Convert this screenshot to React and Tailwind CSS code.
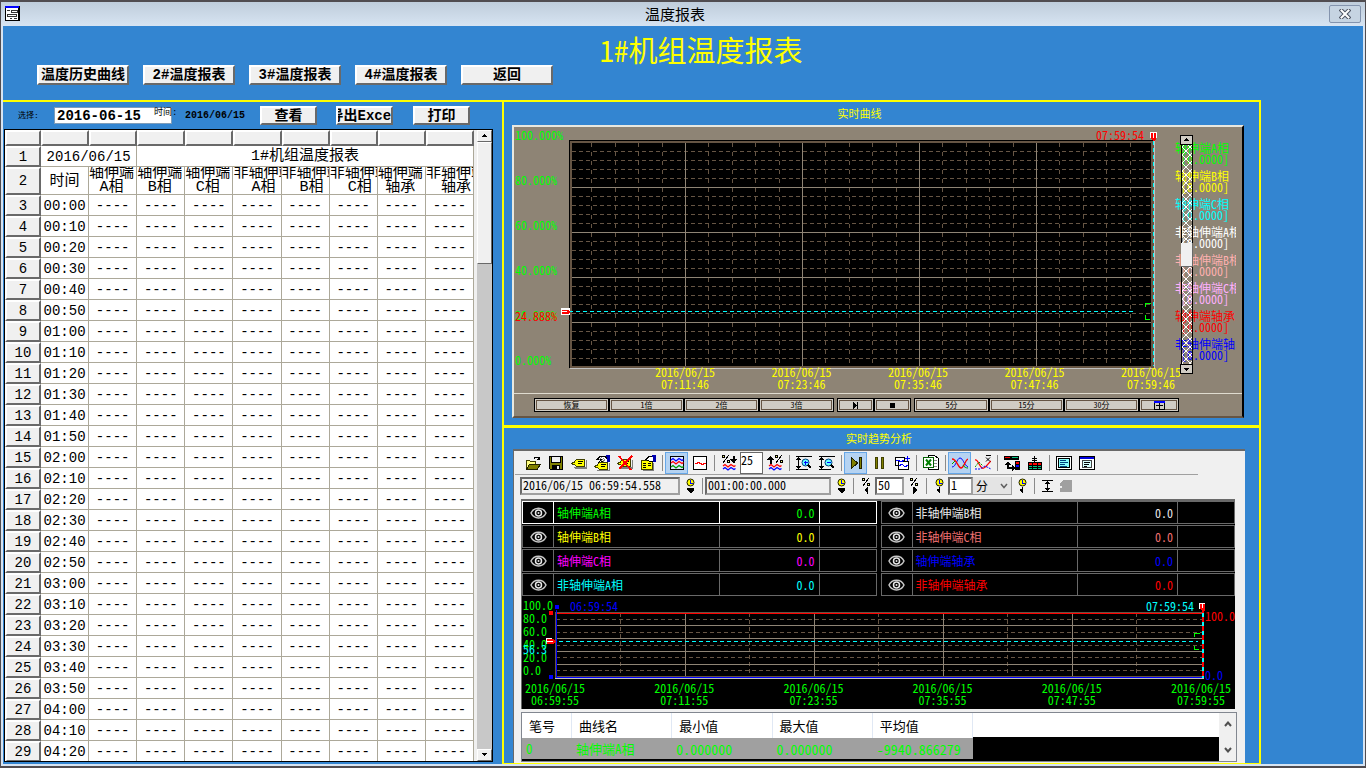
import React from "react";

const GREEN = "#00ff00";

/* ---------- shared bits ---------- */

function BevelButton({ className = "", children }) {
  return (
    <button
      type="button"
      className={`flex items-center justify-center overflow-hidden whitespace-nowrap border-2 border-t-white border-l-white border-r-[#696969] border-b-[#696969] bg-[#f0f0f0] text-[14px] leading-[14px] font-bold text-black ${className}`}
    >
      {children}
    </button>
  );
}

function Icon({ children, size = 16 }) {
  return (
    <svg width={size} height={size} viewBox="0 0 16 16" fill="none" shapeRendering="crispEdges" aria-hidden="true">
      {children}
    </svg>
  );
}

function Arrow({ up }) {
  return (
    <svg width="7" height="4" viewBox="0 0 7 4" shapeRendering="crispEdges" aria-hidden="true">
      {up ? <path d="M3 0h1v1h1v1h1v1h-5v-1h1v-1h1z" /> : <path d="M1 0h5v1h-1v1h-1v1h-1v-1h-1v-1h-1z" />}
    </svg>
  );
}

/* ---------- toolbar icons ---------- */

const Tag = ({ x = 0, y = 0 }) => (
  <g transform={`translate(${x} ${y})`}>
    <path d="M3 11h12v-7h1v9h-12z" fill="#808080" />
    <path d="M5 3h9v8h-9l-2-2h-2l-1-2 1-1h2z" fill="#404000" />
    <path d="M5 4h8v6h-8l-1-2h-2v-1h2z" fill="#ffff00" />
    <path d="M7 5.500h5M7 7.500h4" stroke="#000" />
  </g>
);

const Hand = () => (
  <g>
    <path d="M3 4.500l3-3h5l2 2v5h-2l-3-2-2 2-1-1 2-3h-4z" fill="#fff" stroke="#000" />
    <path d="M5 5l3-3M7 6l3-3M9 7l2-3" stroke="#808080" />
    <path d="M12 0h4v7h-3v-5h-1z" fill="#0000b0" />
  </g>
);

const Wave = ({ y, c }) => <path d={`M2 ${y}l2-1.500 3 2.500 3-2.500 3 2 1.500-1`} stroke={c} shapeRendering="auto" strokeWidth="1.300" />;

const Percent = ({ x = 0, y = 0 }) => (
  <g transform={`translate(${x} ${y})`}>
    <path d="M0 0h3v3h-3zM5 5h3v3h-3z" fill="#000" />
    <path d="M1 1h1v1h-1zM6 6h1v1h-1z" fill="#ffff80" />
    <path d="M7 0l-6 8" stroke="#000" />
  </g>
);

const Clock = ({ up }) => (
  <g>
    <circle cx="8.500" cy="4.500" r="3.500" fill="#ffff00" stroke="#202000" shapeRendering="auto" />
    <path d="M8.500 2v3h2.500" stroke="#0000ff" />
    {up ? <path d="M8.500 9v6M8 11h-2v1h2M7 13h1" stroke="#000" /> : <path d="M5 10h7v2l-3 3h-1l-3-3z" fill="#000" />}
  </g>
);

const Magnifier = ({ plus }) => (
  <g>
    <path d="M0 1.500h16M0 14.500h12M2.500 3v10" stroke="#000" />
    <path d="M0 5l2.500-3 2.500 3zM0 11l2.500 3 2.500-3z" fill="#000" />
    <circle cx="9.500" cy="7.500" r="3.500" fill="#66ffff" stroke="#004080" shapeRendering="auto" />
    <path d={plus ? "M8 7.500h4M9.500 5.500v4" : "M8 7.500h4"} stroke="#0000ff" />
    <path d="M12 10l3 3" stroke="#000" strokeWidth="2" />
  </g>
);

const ICONS = {
  open: (
    <g>
      <path d="M1.500 14.500v-9h3l1 1h5v3" fill="#ffff80" stroke="#404000" />
      <path d="M1.500 14.500l3-5h11l-3.500 5z" fill="#808000" stroke="#202000" />
      <path d="M9 3.500l1.500-1.500h2l2 2M14.500 1.500v3h-3" stroke="#000" />
    </g>
  ),
  save: (
    <g>
      <path d="M1 1h14v14h-13l-1-1z" fill="#000" />
      <path d="M2 2h1v6h10v-6h1v12h-12z" fill="#808000" />
      <path d="M4 2h8v5h-8z" fill="#f0f0f0" />
      <path d="M4 10h8v4h-8z" fill="#000" />
      <path d="M9 11h2v3h-2z" fill="#f0f0f0" />
    </g>
  ),
  tag: <Tag y={1} />,
  tagEdit: (
    <g>
      <Hand />
      <Tag y={4} />
    </g>
  ),
  tagDelete: (
    <g>
      <Tag y={1} />
      <path d="M2 1l12 14M15 1l-13 13" stroke="#ff0000" strokeWidth="1.800" />
    </g>
  ),
  props: (
    <g>
      <path d="M13 15h-10v1h11v-8h-1z" fill="#808080" />
      <path d="M1.500 5.500h11v9h-11z" fill="#ffff00" stroke="#404000" />
      <path d="M3 8.500h3M8 8.500h3M3 10.500h3M8 10.500h3M3 12.500h3" stroke="#000" />
      <path d="M6 4.500l3-3h4v5h-3z" fill="#fff" stroke="#000" />
      <path d="M12 0h4v7h-3v-5h-1z" fill="#0000b0" />
    </g>
  ),
  multi: (
    <g>
      <path d="M1.500 1.500h13v13h-13z" fill="#dde8ff" stroke="#000" />
      <Wave y={5} c="#0000ff" />
      <Wave y={8} c="#ff0000" />
      <Wave y={12} c="#00a000" />
    </g>
  ),
  single: (
    <g>
      <path d="M1.500 1.500h13v13h-13z" fill="#fff" stroke="#000" />
      <path d="M3 8.500h2v-1h2v1h2v1h2v-1h3" stroke="#ff0000" />
    </g>
  ),
  pctDown: (
    <g>
      <Percent x={1} />
      <path d="M12.500 1v7" stroke="#000" strokeWidth="2" />
      <path d="M9 4h7l-3 4h-1z" fill="#000" />
      <Wave y={11} c="#ff0000" />
      <Wave y={14} c="#0000ff" />
    </g>
  ),
  pctUp: (
    <g>
      <Percent x={8} />
      <path d="M3.500 2v7" stroke="#000" strokeWidth="2" />
      <path d="M0 5h7l-3-4h-1z" fill="#000" />
      <Wave y={11} c="#ff0000" />
      <Wave y={14} c="#0000ff" />
    </g>
  ),
  zoomIn: <Magnifier plus />,
  zoomOut: <Magnifier />,
  play: <path d="M3.500 2.500v11l6-5.500zM11.500 2.500h2v11h-2z" fill="#808000" stroke="#202000" />,
  pause: <path d="M4.500 2.500h2v11h-2zM10.500 2.500h2v11h-2z" fill="#808000" stroke="#404000" />,
  copyChart: (
    <g>
      <path d="M1.500 2.500h9v8h-9z" fill="#fff" stroke="#000" />
      <path d="M4.500 6.500h10v8h-10z" fill="#fff" stroke="#000" />
      <path d="M2 6l2-1 3 2 3-2M5 11l3-2 3 3 3-2" stroke="#0000ff" />
      <path d="M11 3.500h5M13.500 1v5" stroke="#0000ff" />
    </g>
  ),
  excel: (
    <g>
      <path d="M5.500 .5h6l4 3v11h-10z" fill="#fff" stroke="#000" />
      <path d="M11 5.500h3M11 8.500h3M11 11.500h3" stroke="#888" />
      <path d="M.5 2.500h10v10h-10z" fill="#fff" stroke="#006000" />
      <path d="M3 4.500l5 6M8 4.500l-5 6" stroke="#008000" strokeWidth="2" shapeRendering="auto" />
    </g>
  ),
  curves: (
    <g shapeRendering="auto">
      <path d="M0 12c4 0 5-9 8-9s4 7 8 9" stroke="#0000ff" />
      <path d="M0 4c5 0 6 9 9 9c3 0 4-8 7-9" stroke="#ff0000" strokeWidth="1.300" />
      <path d="M0 9l3-3M11 10c1 2 3 3 5 3" stroke="#00a000" />
    </g>
  ),
  curvesX: (
    <g shapeRendering="auto">
      <path d="M0 5c3-1 4 6 7 8s6-5 9-7" stroke="#ff0000" strokeWidth="1.300" />
      <path d="M0 12l4-5 4 4" stroke="#00a000" strokeDasharray="2 1" />
      <path d="M0 14l5 0 5-3 6 3" stroke="#0000ff" strokeDasharray="2 1" />
      <path d="M11 .5h5M11 2.500l4 4M15 2.500l-4 4" stroke="#000" />
    </g>
  ),
  swap: (
    <g>
      <path d="M0 1h15v4h-15zM11 6h5v9h-5z" fill="#000" />
      <path d="M1 2h5v1h-5z" fill="#ff0000" />
      <path d="M8 2h6v1h-6z" fill="#00c080" />
      <path d="M12 7h3v2h-3z" fill="#ff0000" />
      <path d="M12 10h3v2h-3z" fill="#0000ff" />
      <path d="M1 10l3-4 3 4h-2v2h3v-2l3 3-3 3v-2h-5v-4z" fill="#000" />
    </g>
  ),
  stack: (
    <g>
      <path d="M7.500 1v7M5 3.500h5M5 5.500h5" stroke="#000" />
      <path d="M1 7h14v8h-14z" fill="#000" />
      <path d="M2 8h3v2h-3zM6 8h4v2h-4zM11 8h3v2h-3z" fill="#ff0000" />
      <path d="M2 11h3v1h-3zM6 11h4v1h-4zM11 11h3v1h-3zM2 13h3v1h-3zM6 13h4v1h-4zM11 13h3v1h-3z" fill="#00c080" />
    </g>
  ),
  list: (
    <g>
      <path d="M.5 1.500h15v13h-15z" fill="#fff" stroke="#000" />
      <path d="M2.500 3.500h11v9h-11z" fill="#88ffff" stroke="#000" />
      <path d="M4 5.500h6M4 7.500h8M4 9.500h5M4 11.500h7" stroke="#004080" />
    </g>
  ),
  windowIcon: (
    <g>
      <path d="M.5 1.500h15v13h-15z" fill="#fff" stroke="#000" />
      <path d="M1 2h14v2h-14z" fill="#0000e0" />
      <path d="M3.500 5.500h9v7h-9z" fill="#d8ffff" stroke="#444" />
      <path d="M5 7.500h6M5 9.500h5M5 11.500h3" stroke="#000" />
    </g>
  ),
  clockDown: <Clock />,
  clockUp: <Clock up />,
  pctLeft: (
    <g>
      <Percent x={4} />
      <path d="M9 9h1v7h-1zM6 12l3-3v6z" fill="#000" />
    </g>
  ),
  pctRight: (
    <g>
      <Percent x={4} />
      <path d="M7 9h1v7h-1zM11 12l-3-3v6z" fill="#000" />
    </g>
  ),
  span: (
    <g>
      <path d="M3 2.500h11M3 13.500h11M8.500 3v10" stroke="#000" />
      <path d="M6 6l2.500-3 2.500 3zM6 10l2.500 3 2.500-3z" fill="#000" />
    </g>
  ),
  grayTag: <path d="M5 2h9v12h-12v-4h2v-2h-2v-3z" fill="#a0a0a0" />,
};

const TOOLBAR = [
  ["open", "打开"], ["save", "保存"], ["tag", "标签"], ["tagEdit", "编辑标签"], ["tagDelete", "删除标签"], ["props", "属性"],
  null,
  ["multi", "多曲线", true], ["single", "单曲线"],
  null,
  ["pctDown", "缩小百分比"], "input", ["pctUp", "放大百分比"],
  null,
  ["zoomIn", "放大"], ["zoomOut", "缩小"],
  null,
  ["play", "播放", true], ["pause", "暂停"], ["copyChart", "复制曲线"],
  null,
  ["excel", "导出"],
  null,
  ["curves", "曲线", true], ["curvesX", "平均曲线"],
  null,
  ["swap", "交换"], ["stack", "排列"],
  null,
  ["list", "列表"], ["windowIcon", "窗口"],
];

const Sep = () => <span className="flex w-1.5 shrink-0 justify-center"><span className="h-4 w-px bg-[#8a8a8a]" /></span>;

function ToolButton({ name, label, active }) {
  return (
    <button
      type="button"
      aria-label={label}
      className={`flex h-[22px] w-[23px] shrink-0 items-center justify-center ${active ? "border border-[#66a7e8] bg-[#b5d3f2]" : ""}`}
    >
      <Icon>{ICONS[name]}</Icon>
    </button>
  );
}

function SmallTool({ name, label }) {
  return (
    <button type="button" aria-label={label} className="flex h-5 w-[19px] shrink-0 items-center justify-center">
      <Icon>{ICONS[name]}</Icon>
    </button>
  );
}

/* ---------- title and header ---------- */

function TitleBar() {
  return (
    <header className="flex h-[26px] shrink-0 items-center border-t-2 border-t-[#504c50] bg-linear-to-b from-[#bfcddb] to-[#d7e4f2] px-1">
      <svg width="16" height="16" viewBox="0 0 16 16" shapeRendering="crispEdges" aria-hidden="true">
        <path d="M0 0h15v15h-15z" />
        <path d="M1 2h12v12h-12z" fill="#fff" />
        <path d="M0 0h14v2h-14z" fill="#0000ff" />
        <path d="M2 4.500h3M6 4.500h6v2h-6zM2 8.500h9v2h-9zM5 12.500h2M9 12.500h3" fill="none" stroke="#333" />
      </svg>
      <h1 className="flex-1 text-center font-['Noto_Sans_CJK_SC',sans-serif] text-[15px] leading-5 text-black">温度报表</h1>
      <button
        type="button"
        aria-label="关闭"
        className="flex h-[18px] w-8 items-center justify-center rounded-xs border border-[#8494ae] bg-[#c6d4e2]"
      >
        <svg width="12" height="10" viewBox="0 0 12 10" fill="none" aria-hidden="true">
          <path d="M2.500 1.500l7 7M9.500 1.500l-7 7" stroke="#4b5160" strokeWidth="4" strokeLinecap="square" />
          <path d="M2.500 1.500l7 7M9.500 1.500l-7 7" stroke="#fff" strokeWidth="2" strokeLinecap="square" />
        </svg>
      </button>
    </header>
  );
}

const NAV = ["温度历史曲线", "2#温度报表", "3#温度报表", "4#温度报表", "返回"];

function PageHeader() {
  return (
    <div className="flex h-[74px] shrink-0 flex-col">
      <h2 className="h-[39px] pt-[3px] pl-9 text-center font-['Noto_Sans_Mono_CJK_SC','Noto_Sans_CJK_SC',monospace] text-[29px] leading-[40px] text-[#ffff00]">1#机组温度报表</h2>
      <nav className="flex gap-3.5 pl-[34px]">
        {NAV.map((n) => (
          <BevelButton key={n} className="h-5 w-[92px]">{n}</BevelButton>
        ))}
      </nav>
    </div>
  );
}

/* ---------- report table ---------- */

const COLS = [
  ["轴伸端", "A相"], ["轴伸端", "B相"], ["轴伸端", "C相"],
  ["非轴伸端", "A相"], ["非轴伸端", "B相"], ["非轴伸端", "C相"],
  ["轴伸端", "轴承"], ["非轴伸端", "轴承"],
];

const TIMES = Array.from({ length: 27 }, (_, i) => {
  const m = i * 10;
  return `${String(Math.floor(m / 60)).padStart(2, "0")}:${String(m % 60).padStart(2, "0")}`;
});

const HEAD = "border-2 border-t-white border-l-white border-r-[#696969] border-b-[#696969] bg-[#f0f0f0] p-0 font-normal";
const CELL = "border-r border-b border-[#aca899] bg-white p-0 text-center overflow-hidden whitespace-nowrap";

function ReportTable() {
  return (
    <div className="mx-px mr-[9px] flex min-h-0 flex-1 justify-between overflow-hidden border border-black bg-[#f0f0f0]">
      <table className="h-max w-[469px] table-fixed border-separate border-spacing-0 text-[14px] leading-4 text-black">
        <colgroup>
          <col className="w-9" />
          {Array.from({ length: 9 }, (_, i) => <col key={i} />)}
        </colgroup>
        <thead>
          <tr className="h-4">
            {Array.from({ length: 10 }, (_, i) => <th key={i} aria-label={`列${i}`} className={HEAD} />)}
          </tr>
        </thead>
        <tbody>
          <tr className="h-[21px]">
            <th className={HEAD}>1</th>
            <td className={`${CELL} pt-0.5`} colSpan={2}>2016/06/15</td>
            <td className={`${CELL} pt-0.5 text-[15px]`} colSpan={7}>1#机组温度报表</td>
          </tr>
          <tr className="h-7">
            <th className={HEAD}>2</th>
            <td className={`${CELL} pt-0.5 text-[15px]`}>时间</td>
            {COLS.map(([a, b], i) => (
              <td key={i} className={CELL}>
                <div className="h-[27px] w-max text-[15px] leading-[14px]">
                  <div>{a}</div>
                  <div>{b}</div>
                </div>
              </td>
            ))}
          </tr>
          {TIMES.map((t, i) => (
            <tr key={t} className="h-[21px]">
              <th className={HEAD}>{i + 3}</th>
              <td className={`${CELL} pt-0.5`}>{t}</td>
              {COLS.map((_, c) => <td key={c} className={`${CELL} pt-0.5`}>----</td>)}
            </tr>
          ))}
        </tbody>
      </table>
      <div className="flex w-[15px] flex-col bg-[#c8c8c8]">
        <button type="button" aria-label="上移" className="flex h-3 items-center justify-center border border-t-white border-l-white border-r-[#696969] border-b-[#696969] bg-[#f0f0f0]"><Arrow up /></button>
        <div className="h-[122px] border border-t-white border-l-white border-r-[#696969] border-b-[#696969] bg-[#f0f0f0]" />
        <div className="flex-1" />
        <button type="button" aria-label="下移" className="flex h-3 items-center justify-center border border-t-white border-l-white border-r-[#696969] border-b-[#696969] bg-[#f0f0f0]"><Arrow /></button>
      </div>
    </div>
  );
}

function ReportPanel() {
  return (
    <section className="flex w-[499px] shrink-0 flex-col pb-0.5">
      <div className="flex h-[27px] shrink-0 items-center pl-[15px] text-black">
        <label htmlFor="day" className="w-9 text-[8px] leading-3">选择:</label>
        <div className="relative mr-[13px]">
          <input id="day" defaultValue="2016-06-15" className="block h-[17px] w-[118px] border border-[#7f9db9] bg-white p-0 pl-0.5 text-[14px] leading-4 font-bold" />
          <span className="absolute top-0 left-[100px] text-[9px] leading-3 whitespace-nowrap">时间:</span>
        </div>
        <time className="w-[75px] text-[10px] leading-3 font-bold">2016/06/15</time>
        <BevelButton className="h-[19px] w-[57px]">查看</BevelButton>
        <BevelButton className="ml-[19px] h-[19px] w-[57px]">导出Excel</BevelButton>
        <BevelButton className="ml-5 h-[19px] w-[57px]">打印</BevelButton>
      </div>
      <ReportTable />
    </section>
  );
}

/* ---------- real time chart ---------- */

const range = (n, f) => Array.from({ length: n }, (_, i) => f(i));

const LEGEND = [
  ["轴伸端A相", "#00ff00"], ["轴伸端B相", "#ffff00"], ["轴伸端C相", "#00ffff"], ["非轴伸端A相", "#ffffff"],
  ["非轴伸端B相", "#ffb0b0"], ["非轴伸端C相", "#ffb0ff"], ["轴伸端轴承", "#ff0000"], ["非轴伸端轴承", "#0000ff"],
];

const TICKS1 = ["07:11:46", "07:23:46", "07:35:46", "07:47:46", "07:59:46"];

function RealtimeChart() {
  return (
    <svg viewBox="0 0 728 266" className="block h-auto w-full" fontSize="12" role="img" aria-label="实时曲线">
      <defs>
        <pattern id="hatch" width="8" height="8" patternUnits="userSpaceOnUse">
          <path d="M0 0l8 8M8 0l-8 8" stroke="#fff" strokeWidth="1" />
        </pattern>
        <clipPath id="legendClip"><rect x="655" y="0" width="67" height="260" /></clipPath>
      </defs>
      <g shapeRendering="crispEdges" fill="none">
        <rect x="55" y="13" width="585" height="228" fill="#665544" />
        <path d="M55.500 241v-227.500h585" stroke="#000" />
        <path d="M56 241.500h584.500v-228" stroke="#c0c0c0" />
        <rect x="58" y="16" width="579" height="223" fill="#000" />
        {range(24, (i) => i + 1).filter((i) => i % 5 !== 0).map((i) => (
          <path key={i} d={`M${Math.round(54 + i * 23.4) + 0.5} 16v223`} stroke="#665544" strokeDasharray="4 5" />
        ))}
        {range(24, (i) => i + 1).filter((i) => i % 5 !== 0).map((i) => (
          <path key={i} d={`M58 ${15.5 + i * 9}h579`} stroke="#665544" strokeDasharray="4 3" />
        ))}
        {range(4, (i) => (
          <path key={i} d={`M${171.5 + i * 117} 16v223M58 ${60.5 + i * 45}h579`} stroke="#8e8475" />
        ))}
        <path d="M55 184.500h567" stroke="#00ffff" strokeDasharray="4 3" />
        <path d="M639.500 14v225" stroke="#00ffff" strokeDasharray="4 3" />
        <path d="M631.500 180v-3.500h5M631.500 188v4h4" stroke={GREEN} />
        <path d="M47 181h9v7h-9z" fill="#fff" />
        <path d="M48 183h6l3 2-3 2h-6z" fill="#ff0000" />
        <path d="M48 184.500h5" stroke="#fff" />
        <path d="M636 5h7v6h-7z" fill="#fff" />
        <path d="M637 6h5v6l-2 3-3-3z" fill="#ff0000" />
        <path d="M639.500 6v5" stroke="#fff" />
      </g>
      <g fill={GREEN}>
        <text x="1" y="13">100.000%</text>
        <text x="1" y="58">80.000%</text>
        <text x="1" y="103">60.000%</text>
        <text x="1" y="148">40.000%</text>
        <text x="1" y="193">20.000%</text>
        <text x="1" y="238">0.000%</text>
      </g>
      <text x="1" y="194" fill="#ff0000">24.888%</text>
      <text x="582" y="13" fill="#ff0000">07:59:54</text>
      <g fill="#ffff00" textAnchor="middle">
        {TICKS1.map((t, i) => (
          <text key={t}>
            <tspan x={171 + i * 116.5} y="250">2016/06/15</tspan>
            <tspan x={171 + i * 116.5} y="262">{t}</tspan>
          </text>
        ))}
      </g>
      <g clipPath="url(#legendClip)">
        {LEGEND.map(([n, c], i) => (
          <g key={n} fill={c}>
            <text x="661" y={26 + i * 28}>{n}</text>
            <text x="667" y={37 + i * 28}>[0.0000]</text>
          </g>
        ))}
      </g>
      <g shapeRendering="crispEdges">
        <rect x="668" y="18" width="10" height="219" fill="url(#hatch)" />
        <path d="M667.500 18v219M678.500 18v219" stroke="#000" />
        <rect x="666.500" y="8.500" width="12" height="9" fill="#d0ccc4" stroke="#000" />
        <path d="M672 11h1v1h1v1h1v1h-5v-1h1v-1h1z" />
        <rect x="666.500" y="237.500" width="12" height="9" fill="#d0ccc4" stroke="#000" />
        <path d="M670 241h5v1h-1v1h-1v1h-1v-1h-1v-1h-1z" />
        <rect x="667" y="116" width="11" height="23" fill="#f0f0f0" />
        <path d="M678.500 116v23.500h-12" stroke="#696969" fill="none" />
      </g>
    </svg>
  );
}

function ScopeButton({ className = "w-[75px]", label, children }) {
  return (
    <button type="button" aria-label={label} className={`flex h-3.5 items-center justify-center border border-black bg-[#d0ccc4] p-px text-[8px] leading-[8px] text-black ${className}`}>
      <span className="flex h-full w-full items-center justify-center border border-[#665544]">{children}</span>
    </button>
  );
}

function RealtimePanel() {
  return (
    <section className="h-[323px] shrink-0 pl-2 pr-[15px]">
      <h3 className="h-[23px] pt-1 pr-[37px] text-center text-[11px] leading-[14px] text-[#ffff00]">实时曲线</h3>
      <div className="border-2 border-t-[#e8e8e0] border-l-[#e8e8e0] border-r-black border-b-[#665544] bg-[#8e8475]">
        <RealtimeChart />
        <div className="flex h-[23px] items-start border-t border-[#e0dcd0] pt-1 pl-5">
          <ScopeButton>恢复</ScopeButton>
          <ScopeButton>1倍</ScopeButton>
          <ScopeButton>2倍</ScopeButton>
          <ScopeButton>3倍</ScopeButton>
          <ScopeButton className="ml-[3px] w-[37px]" label="前进">
            <svg width="7" height="7" viewBox="0 0 7 7" shapeRendering="crispEdges"><path d="M1 0l4 3.500-4 3.500zM5 0h1v7h-1z" /></svg>
          </ScopeButton>
          <ScopeButton className="w-[37px]" label="停止">
            <svg width="5" height="5" viewBox="0 0 5 5"><path d="M0 0h5v5h-5z" /></svg>
          </ScopeButton>
          <ScopeButton className="ml-[3px] w-[75px]">5分</ScopeButton>
          <ScopeButton>15分</ScopeButton>
          <ScopeButton>30分</ScopeButton>
          <ScopeButton className="w-10" label="表格">
            <svg width="11" height="9" viewBox="0 0 11 9" fill="none" shapeRendering="crispEdges">
              <path d="M.5 .5h10v8h-10zM5.500 1v7M2 4.500h7" stroke="#000" />
              <path d="M0 0h11v2h-11z" fill="#0000ff" />
            </svg>
          </ScopeButton>
        </div>
      </div>
    </section>
  );
}

/* ---------- trend analysis ---------- */

const PENS = [
  ["轴伸端A相", "#00ff00"], ["非轴伸端B相", "#e8e8e8"],
  ["轴伸端B相", "#ffff00"], ["非轴伸端C相", "#f07070"],
  ["轴伸端C相", "#ff00ff"], ["轴伸端轴承", "#0000ff"],
  ["非轴伸端A相", "#00ffff"], ["非轴伸端轴承", "#ff0000"],
];

function Eye() {
  return (
    <svg width="17" height="12" viewBox="0 0 17 12" fill="none" aria-hidden="true">
      <path d="M1 6c3-6.500 12-6.500 15 0c-3 6.500-12 6.500-15 0z" stroke="#c8c8c8" strokeWidth="1.500" />
      <circle cx="8.500" cy="6" r="3" stroke="#e8e8e8" strokeWidth="1.500" />
      <circle cx="8.500" cy="6" r="1" fill="#e0e0e0" />
    </svg>
  );
}

function PenGrid() {
  return (
    <div className="grid grid-cols-2 gap-x-1 gap-y-px pb-0.5 text-[12px] leading-[14px]">
      {PENS.map(([n, c], i) => {
        const line = i === 0 ? "border-white" : "border-[#696969]";
        return (
          <div key={n} className={`flex h-[23px] border ${line}`} style={{ color: c }}>
            <span className={`flex w-[31px] shrink-0 items-center justify-center border-r ${line}`}><Eye /></span>
            <span className={`flex flex-1 items-center border-r pl-[3px] ${line}`}>{n}</span>
            <span className={`flex w-[100px] items-center justify-end border-r pr-1 ${line}`}>0.0</span>
            <span className="w-14" />
          </div>
        );
      })}
    </div>
  );
}

const TICKS2 = ["06:59:55", "07:11:55", "07:23:55", "07:35:55", "07:47:55", "07:59:55"];

function TrendChart() {
  return (
    <svg viewBox="0 0 713 111" className="block h-auto w-full" fontSize="12" role="img" aria-label="实时趋势">
      <g shapeRendering="crispEdges" fill="none">
        {range(5, (i) => (
          <path key={i} d={`M${98.5 + i * 129} 15v64M34 ${21.5 + i * 12.8}h646`} stroke="#665544" strokeDasharray="4 3" />
        ))}
        {range(4, (i) => (
          <path key={i} d={`M${163.5 + i * 129} 15v64M34 ${27.5 + i * 13}h646`} stroke="#8e8475" />
        ))}
        <path d="M33 14.500h648" stroke="#665544" />
        <path d="M33 15.500h648" stroke="#ff0000" />
        <path d="M33 78.500h648" stroke="#665544" />
        <path d="M33 80.500h649" stroke="#c0c0c0" />
        <path d="M34.500 12v68M34 79.500h647" stroke="#0000ff" />
        <path d="M33.500 14v66" stroke="#665544" />
        <path d="M30 43.500h646" stroke="#00ffff" strokeDasharray="4 3" />
        <path d="M681 12v68" stroke="#ff0000" strokeWidth="2" />
        <path d="M681 15v65" stroke="#00ffff" strokeWidth="2" strokeDasharray="4 5" />
        <path d="M672.500 39v-3.500h5M672.500 48v3.500h4" stroke={GREEN} />
        <path d="M33 7h4v4h-4zM27 77h4v4h-4z" fill="#0000ff" />
        <path d="M27 13h4v4h-4z" fill="#ff0000" />
        <path d="M24 40h6v6h-6z" fill="#fff" />
        <path d="M25 41h6l3 2-3 3h-6z" fill="#ff0000" />
        <path d="M25 43.500h6" stroke="#fff" />
        <path d="M677 5h6v6h-6z" fill="#fff" />
        <path d="M678 6h5v6l-2 2-3-3z" fill="#ff0000" />
        <path d="M680.500 6v4" stroke="#fff" />
      </g>
      <g fill={GREEN}>
        {["100.0", "80.0", "60.0", "40.0", "20.0", "0.0"].map((t, i) => (
          <text key={t} x="1" y={12 + i * 13}>{t}</text>
        ))}
      </g>
      <text x="1" y="56" fill="#00ffff">56.3</text>
      <text x="48" y="13" fill="#0000ff">06:59:54</text>
      <text x="624" y="13" fill="#00ffff">07:59:54</text>
      <text x="683" y="23" fill="#ff0000">100.0</text>
      <text x="683" y="82" fill="#0000ff">0.0</text>
      <g fill={GREEN} textAnchor="middle">
        {TICKS2.map((t, i) => (
          <text key={t}>
            <tspan x={33 + i * 129.2} y="95">2016/06/15</tspan>
            <tspan x={33 + i * 129.2} y="107">{t}</tspan>
          </text>
        ))}
      </g>
    </svg>
  );
}

const FIELD = "h-[18px] border-2 border-t-[#696969] border-l-[#696969] border-r-[#a0a0a0] border-b-[#a0a0a0] p-0 pb-1 pl-px text-[12px] leading-[14px] text-black";

function TrendToolbars() {
  return (
    <div className="w-[683px]">
      <div className="flex h-6 items-center border-b border-[#a0a0a0] pl-1.5">
        {TOOLBAR.map((t, i) => {
          if (t === null) return <Sep key={i} />;
          if (t === "input")
            return <input key={i} aria-label="百分比" defaultValue="25" className="h-[22px] w-[23px] shrink-0 border border-[#696969] bg-white p-0 pb-1.5 text-[12px] text-black" />;
          return <ToolButton key={i} name={t[0]} label={t[1]} active={t[2]} />;
        })}
      </div>
      <div className="flex h-[22px] items-center pl-[5px]">
        <input aria-label="开始时间" defaultValue="2016/06/15 06:59:54.558" className={`${FIELD} w-[160px] bg-[#f0f0f0]`} />
        <SmallTool name="clockDown" label="选择开始时间" />
        <Sep />
        <input aria-label="时间跨度" defaultValue="001:00:00.000" className={`${FIELD} w-[126px] bg-[#f0f0f0]`} />
        <SmallTool name="clockDown" label="选择跨度" />
        <Sep />
        <SmallTool name="pctLeft" label="向左" />
        <input aria-label="移动百分比" defaultValue="50" className={`${FIELD} w-[29px] bg-white`} />
        <SmallTool name="pctRight" label="向右" />
        <Sep />
        <SmallTool name="clockUp" label="后退" />
        <input aria-label="数值" defaultValue="1" className={`${FIELD} w-[25px] bg-white`} />
        <div className="relative flex items-center">
          <select aria-label="单位" className="h-[18px] w-[39px] appearance-none border-r border-b border-[#a0a0a0] bg-[#e4e4e4] pl-[3px] text-[12px] leading-4 text-black">
            <option>分</option>
          </select>
          <svg width="8" height="6" viewBox="0 0 8 6" className="pointer-events-none absolute right-1" fill="none" aria-hidden="true">
            <path d="M1 1l3 3.500L7 1" stroke="#606060" strokeWidth="1.500" />
          </svg>
        </div>
        <SmallTool name="clockUp" label="前进" />
        <Sep />
        <SmallTool name="span" label="跨度" />
        <SmallTool name="grayTag" label="标记" />
      </div>
    </div>
  );
}

function StatsTable() {
  return (
    <div className="flex h-[50px] border border-[#828790] bg-black">
      <div className="flex-1 bg-linear-to-b from-white from-50% to-black to-50%">
        <table className="w-[451px] table-fixed border-separate border-spacing-0 text-left text-[13px] leading-5">
          <colgroup><col className="w-[50px]" /><col /><col /><col /><col /></colgroup>
          <thead>
            <tr className="h-[25px] bg-white text-black">
              {["笔号", "曲线名", "最小值", "最大值", "平均值"].map((h) => (
                <th key={h} className="border-r border-[#e0e8f4] p-0 pl-[7px] font-normal">{h}</th>
              ))}
            </tr>
          </thead>
          <tbody>
            <tr className="h-[21px] bg-[#a0a0a0] text-[#00ff00]">
              <td className="p-0 pl-1">0</td>
              <td className="p-0 pl-1">轴伸端A相</td>
              <td className="p-0 pl-1 text-[14px]">0.000000</td>
              <td className="p-0 pl-1 text-[14px]">0.000000</td>
              <td className="p-0 pl-1 text-[14px]">-9940.866279</td>
            </tr>
          </tbody>
        </table>
      </div>
      <div className="flex w-[17px] flex-col items-center justify-between bg-[#f0f0f0] py-2">
        <svg width="8" height="6" viewBox="0 0 8 6" fill="none" aria-hidden="true"><path d="M1 5l3-3.500L7 5" stroke="#505050" strokeWidth="2" /></svg>
        <svg width="8" height="6" viewBox="0 0 8 6" fill="none" aria-hidden="true"><path d="M1 1l3 3.500L7 1" stroke="#505050" strokeWidth="2" /></svg>
      </div>
    </div>
  );
}

function TrendPanel() {
  return (
    <section className="flex min-h-0 flex-1 flex-col pl-[9px] pr-[14px]">
      <h3 className="h-[21px] shrink-0 pt-[3px] text-center text-[11px] leading-[14px] text-[#ffff00]">实时趋势分析</h3>
      <div className="min-h-0 flex-1 overflow-hidden border-t-2 border-l border-[#696969] bg-[#f0f0f0] pl-px">
        <TrendToolbars />
        <div className="mt-0.5 mr-2.5 ml-1.5 border-t-2 border-l border-[#696969] bg-black">
          <PenGrid />
          <TrendChart />
        </div>
        <div className="mt-[3px] mr-2 ml-1.5">
          <StatsTable />
        </div>
      </div>
    </section>
  );
}

export default function App() {
  return (
    <div className="flex h-screen flex-col overflow-hidden border-x border-[#504c50] bg-[#d7e4f2] font-['Liberation_Mono','Noto_Sans_CJK_SC',monospace]">
      <TitleBar />
      <main className="mx-0.5 flex min-h-0 flex-1 flex-col bg-[#3385d1]">
        <PageHeader />
        <div className="mr-[102px] flex min-h-0 flex-1 border-t-2 border-r-2 border-[#ffff00]">
          <ReportPanel />
          <div className="flex min-w-0 flex-1 flex-col border-b border-l-2 border-[#ffff00] font-['Noto_Sans_Mono_CJK_SC','Noto_Sans_CJK_SC',monospace]">
            <RealtimePanel />
            <div className="h-[3px] shrink-0 bg-[#ffff00]" />
            <TrendPanel />
          </div>
        </div>
      </main>
      <footer className="h-1 shrink-0 border-b-2 border-[#504c50] bg-[#d7e4f2]" />
    </div>
  );
}
